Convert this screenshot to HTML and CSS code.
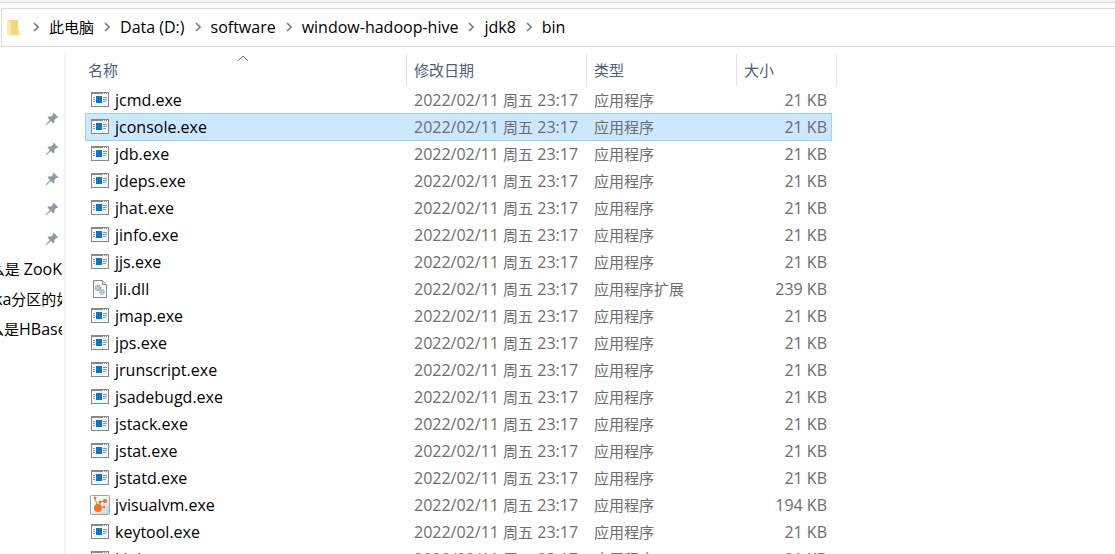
FILE: index.html
```
<!DOCTYPE html>
<html lang="zh-CN">
<head>
    <meta charset="utf-8">
    <title>bin</title>
    <link rel="stylesheet" href="styles.css">
</head>
<body>

<svg class="defs" width="0" height="0" aria-hidden="true">
    <symbol id="chevron" viewBox="0 0 6 10">
        <path d="M1 1l4 4-4 4" fill="none" stroke="#7a7a7a" stroke-width="1.6"/>
    </symbol>
    <symbol id="pin" viewBox="0 0 14 14">
        <path d="M8.6 0.6L13.4 5.4 12.2 6 11.6 5.7 9.4 8 9.4 10.6 8.4 11.4 5.8 8.9 1.6 13 0.6 13.3 0.9 12.2 4.9 8 2.5 5.6 3.4 4.6 6.1 4.6 8.3 2.4 8 1.8z" fill="#8f9aa3"/>
    </symbol>
    <symbol id="exe" viewBox="0 0 18 15">
        <rect x="0.5" y="0.5" width="17" height="14" fill="#f7f7f7" stroke="#85898d"/>
        <path d="M0 0h18v2H0z" fill="#85898d"/>
        <path d="M12 1h1v1h-1zM14 1h1v1h-1zM16 1h1v1h-1z" fill="#fff"/>
        <path d="M5 4h6v7H5z" fill="#0078d7"/>
        <path d="M2 5h2v1H2zM2 7h2v1H2zM2 9h2v1H2zM12 5h4v1h-4zM12 7h4v1h-4zM12 9h3v1h-3z" fill="#909498"/>
    </symbol>
    <symbol id="dll" viewBox="0 0 18 18">
        <path d="M2.5 0.5h9l4 4v13h-13z" fill="#fafafa" stroke="#8c8c8c"/>
        <path d="M11.5 0.5v4h4" fill="#e4e4e4" stroke="#8c8c8c"/>
        <circle cx="7" cy="8" r="2.3" fill="none" stroke="#8a949c" stroke-width="1.8" stroke-dasharray="1.2 .5"/>
        <circle cx="7" cy="8" r="1.4" fill="none" stroke="#a6afb5"/>
        <circle cx="11" cy="12" r="2" fill="none" stroke="#86aec6" stroke-width="1.6" stroke-dasharray="1.1 .4"/>
        <circle cx="11" cy="12" r="1" fill="none" stroke="#9fc3d8"/>
    </symbol>
    <symbol id="visualvm" viewBox="0 0 20 20">
        <linearGradient id="vmBack" x1="0" y1="0" x2="1" y2="1">
            <stop offset="0.3" stop-color="#fff"/>
            <stop offset="1" stop-color="#b5d0e4"/>
        </linearGradient>
        <rect x="0.5" y="0.5" width="19" height="19" rx="1" fill="url(#vmBack)" stroke="#93a4b3"/>
        <path d="M8 13L5 3M8 13L10 7l5-1" fill="none" stroke="#f37021"/>
        <circle cx="8" cy="13" r="4" fill="#f37021"/>
        <circle cx="5" cy="3" r="1.5" fill="#f37021"/>
        <circle cx="10" cy="7" r="1.6" fill="#f37021"/>
        <circle cx="15" cy="6" r="2.1" fill="#f37021"/>
        <circle cx="14" cy="12" r="1.3" fill="#f37021"/>
    </symbol>
</svg>

<div class="explorer">
    <div class="ribbon"></div>

    <nav class="address">
        <svg class="folder" viewBox="0 0 12 16" aria-hidden="true">
            <path d="M1 0h10v10h1v5H1z" fill="#f9d777"/>
            <path d="M0 0l4 2v14l-4-1z" fill="#ffe9a6"/>
        </svg>
        <svg class="chevron"><use href="#chevron"/></svg><a href="#" class="zh">此电脑</a>
        <svg class="chevron"><use href="#chevron"/></svg><a href="#">Data (D:)</a>
        <svg class="chevron"><use href="#chevron"/></svg><a href="#">software</a>
        <svg class="chevron"><use href="#chevron"/></svg><a href="#">window-hadoop-hive</a>
        <svg class="chevron"><use href="#chevron"/></svg><a href="#">jdk8</a>
        <svg class="chevron"><use href="#chevron"/></svg><a href="#">bin</a>
    </nav>

    <div class="main">
        <ul class="quick">
            <li><svg class="pin"><use href="#pin"/></svg></li>
            <li><svg class="pin"><use href="#pin"/></svg></li>
            <li><svg class="pin"><use href="#pin"/></svg></li>
            <li><svg class="pin"><use href="#pin"/></svg></li>
            <li><svg class="pin"><use href="#pin"/></svg></li>
            <li><a href="#"><span class="zh">么是</span> ZooK</a></li>
            <li class="long"><a href="#">ka<span class="zh">分区的如</span></a></li>
            <li class="long zh-first"><a href="#"><span class="zh">么是</span>HBase</a></li>
        </ul>

        <table class="files">
            <colgroup>
                <col class="col-name">
                <col class="col-date">
                <col class="col-type">
                <col class="col-size">
                <col class="col-end">
            </colgroup>
            <thead>
                <tr class="zh">
                    <th>名称<svg class="sort" viewBox="0 0 10 6"><path d="M0.5 5.500L5 1l4.500 4.500" fill="none" stroke="#6d6d6d"/></svg></th>
                    <th>修改日期</th>
                    <th>类型</th>
                    <th colspan="2">大小</th>
                </tr>
            </thead>
            <tbody id="rows"></tbody>
        </table>
    </div>
</div>

<script src="files.js"></script>
</body>
</html>
```
FILE: styles.css
```
body, html {
    margin: 0;
    height: 100%;
    background: #fff;
    color: #000;
    font-family: "Open Sans", "Noto Sans CJK SC", sans-serif;
    font-size: 16px;
}

a {
    color: inherit;
    text-decoration: none;
}

/* Chinese glyphs look bigger than latin ones, so they go a size down */
.zh {
    font-size: 15px;
}

.defs {
    position: absolute;
}

.explorer {
    display: flex;
    flex-direction: column;
    height: 100vh;
    overflow: hidden;
}

.ribbon {
    flex: none;
    height: 2px;
    background: #f5f6f7;
    border-bottom: 1px solid #dadbdc;
}

.address {
    display: flex;
    flex: none;
    align-items: center;
    height: 37px;
    margin: 5px 0 0 1px;
    padding-left: 5px;
    border: 1px solid #d9d9d9;
    border-right: 0;
    white-space: nowrap;
}

.address a {
    padding-bottom: 2px;
    line-height: 20px;
}

.folder {
    width: 12px;
    height: 16px;
    margin-right: 4px;
}

.chevron {
    width: 6px;
    height: 10px;
    margin: 0 10px 2px 10px;
}

.main {
    display: flex;
    flex: 1;
    min-height: 0;
    padding-top: 7px;
    overflow: hidden;
}

.quick {
    flex: none;
    width: 62px;
    margin: 0 20px 0 0;
    padding: 50px 2px 0 0;
    border-right: 1px solid #f0f0f0;
    line-height: 20px;
    list-style: none;
}

.quick li {
    display: flex;
    align-items: center;
    justify-content: flex-end;
    height: 30px;
    overflow: hidden;
    white-space: nowrap;
}

.quick .long {
    justify-content: flex-start;
    margin-left: -6px;
}

.quick .zh-first {
    margin-left: -11px;
}

.pin {
    width: 14px;
    height: 14px;
    margin-right: 3px;
}

.files {
    flex: none;
    align-self: flex-start;
    width: 752px;
    border-collapse: separate;
    border-spacing: 0;
    table-layout: fixed;
}

.col-name { width: 322px; }
.col-date { width: 180px; }
.col-type { width: 150px; }
.col-size { width: 95px; }
.col-end { width: 5px; }

.files th {
    position: relative;
    height: 32px;
    padding: 0 0 0 7px;
    border-right: 1px solid #e2e2e2;
    color: #4c607a;
    font-weight: normal;
    line-height: 20px;
    text-align: left;
}

.files th:first-child {
    padding-left: 3px;
}

.sort {
    position: absolute;
    top: 1px;
    left: 50%;
    width: 10px;
    height: 6px;
    margin-left: -8px;
}

.files td {
    height: 27px;
    padding: 0 0 0 7px;
    color: #6d6d6d;
    line-height: 20px;
    white-space: nowrap;
}

.files td.name {
    padding-left: 5px;
    color: #000;
}

.files td.size {
    padding-right: 5px;
    text-align: right;
}

.files td.end {
    padding: 0;
}

.file {
    display: flex;
    align-items: center;
}

.icon {
    width: 20px;
    height: 20px;
    margin-right: 5px;
}

.icon.exe {
    width: 18px;
    height: 15px;
    margin: 0 6px 0 1px;
}

.icon.dll {
    width: 18px;
    height: 18px;
    margin: 0 6px 0 1px;
}

.selected td:not(.end) {
    background: #cce8ff;
    box-shadow: inset 0 1px #99d1ff, 0 1px #99d1ff;
}

.selected td.name {
    box-shadow: inset 1px 1px #99d1ff, 0 1px #99d1ff;
}

.selected td.size {
    box-shadow: inset -1px 1px #99d1ff, 0 1px #99d1ff;
}
```
FILE: files.js
```
var files = [
    ['jcmd.exe', 'exe', '应用程序', '21 KB'],
    ['jconsole.exe', 'exe', '应用程序', '21 KB'],
    ['jdb.exe', 'exe', '应用程序', '21 KB'],
    ['jdeps.exe', 'exe', '应用程序', '21 KB'],
    ['jhat.exe', 'exe', '应用程序', '21 KB'],
    ['jinfo.exe', 'exe', '应用程序', '21 KB'],
    ['jjs.exe', 'exe', '应用程序', '21 KB'],
    ['jli.dll', 'dll', '应用程序扩展', '239 KB'],
    ['jmap.exe', 'exe', '应用程序', '21 KB'],
    ['jps.exe', 'exe', '应用程序', '21 KB'],
    ['jrunscript.exe', 'exe', '应用程序', '21 KB'],
    ['jsadebugd.exe', 'exe', '应用程序', '21 KB'],
    ['jstack.exe', 'exe', '应用程序', '21 KB'],
    ['jstat.exe', 'exe', '应用程序', '21 KB'],
    ['jstatd.exe', 'exe', '应用程序', '21 KB'],
    ['jvisualvm.exe', 'visualvm', '应用程序', '194 KB'],
    ['keytool.exe', 'exe', '应用程序', '21 KB'],
    ['kinit.exe', 'exe', '应用程序', '21 KB']
];
var selected = 'jconsole.exe';

document.getElementById('rows').innerHTML = files.map(function(f) {
    return '<tr' + (f[0] === selected ? ' class="selected"' : '') + '>' +
        '<td class="name"><div class="file"><svg class="icon ' + f[1] + '"><use href="#' + f[1] + '"/></svg>' + f[0] + '</div></td>' +
        '<td>2022/02/11 <span class="zh">周五</span> 23:17</td>' +
        '<td class="zh">' + f[2] + '</td>' +
        '<td class="size">' + f[3] + '</td>' +
        '<td class="end"></td></tr>';
}).join('');
```
